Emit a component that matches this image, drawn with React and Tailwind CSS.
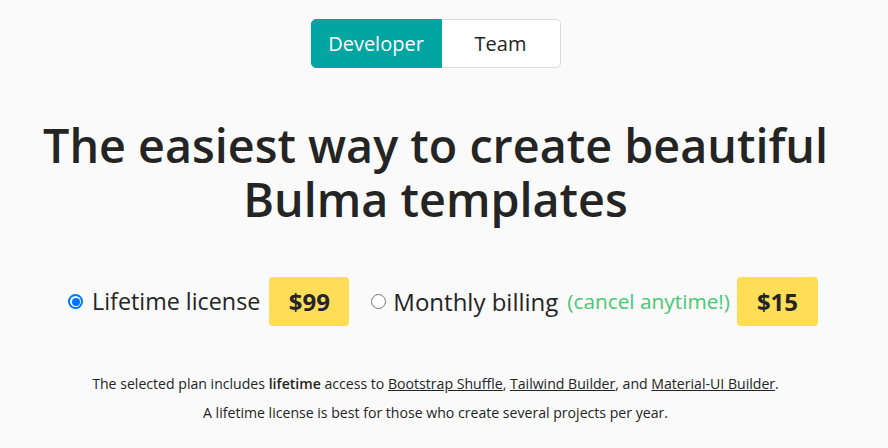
export default function App() {
  return (
    <div className="min-h-[448px] w-full bg-[#fafafa] text-[#242424]" style={{ fontFamily: '"Open Sans", "Noto Sans", sans-serif' }}>
      <div className="w-[871px] flex flex-col items-center">
        <div className="mt-[19px] flex h-[49px]">
          <button className="w-[131px] h-full rounded-l-[5px] bg-[#00a5a1] text-white text-[20px] border border-[#00a5a1]">Developer</button>
          <button className="w-[119px] h-full rounded-r-[5px] bg-white text-[#242424] text-[20px] border border-[#dbdbdb] border-l-0">Team</button>
        </div>
        <h1 className="mt-[50px] text-center text-[46.7px] leading-[54px] font-semibold">
          The easiest way to create beautiful<br />Bulma templates
        </h1>
        <div className="mt-[51px] w-full pl-[68px] flex items-center">
          <label className="flex items-center">
            <span className="w-[15px] h-[15px] rounded-full border-2 border-[#0075ff] flex items-center justify-center mr-[9px]">
              <span className="w-[8px] h-[8px] rounded-full bg-[#0075ff]" />
            </span>
            <span className="text-[23.3px]">Lifetime license</span>
          </label>
          <span className="ml-[9px] w-[80px] h-[49px] rounded-[4px] bg-[#ffdd57] flex items-center justify-center text-[24px] font-bold">$99</span>
          <label className="ml-[22px] flex items-center">
            <span className="w-[15px] h-[15px] rounded-full border border-[#767676] bg-white mr-[7px]" />
            <span className="text-[24px]">Monthly billing</span>
            <span className="ml-[9px] text-[20.8px] text-[#48c774]">(cancel anytime!)</span>
          </label>
          <span className="ml-[7px] w-[81px] h-[49px] rounded-[4px] bg-[#ffdd57] flex items-center justify-center text-[24px] font-bold">$15</span>
        </div>
        <div className="mt-[43px] text-center text-[14.1px] leading-[29px]">
          <p>The selected plan includes <strong className="font-semibold">lifetime</strong> access to <a className="underline">Bootstrap Shuffle</a>, <a className="underline">Tailwind Builder</a>, and <a className="underline">Material-UI Builder</a>.</p>
          <p>A lifetime license is best for those who create several projects per year.</p>
        </div>
      </div>
    </div>
  );
}
